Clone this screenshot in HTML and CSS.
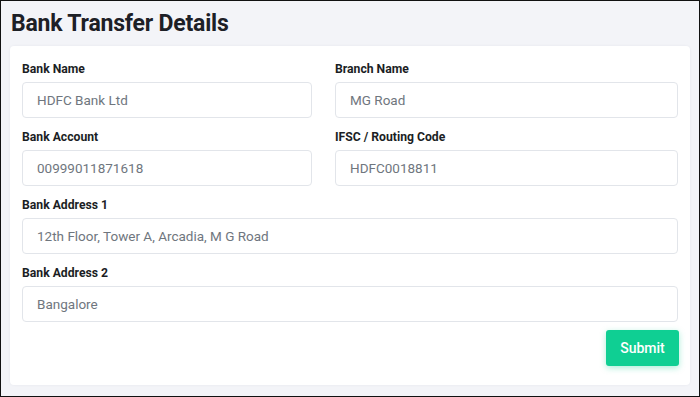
FILE: index.html
```html
<!DOCTYPE html>
<html lang="en">
<head>
<meta charset="utf-8">
<title>Bank Transfer Details</title>
<link rel="stylesheet" href="styles.css">
</head>
<body>
<div class="frame">
  <h1 class="title">Bank Transfer Details</h1>
  <form class="card">
    <div class="grid">
      <div class="field">
        <label class="label">Bank Name</label>
        <div class="input">HDFC Bank Ltd</div>
      </div>
      <div class="field">
        <label class="label">Branch Name</label>
        <div class="input">MG Road</div>
      </div>
      <div class="field">
        <label class="label">Bank Account</label>
        <div class="input">00999011871618</div>
      </div>
      <div class="field">
        <label class="label">IFSC / Routing Code</label>
        <div class="input">HDFC0018811</div>
      </div>
      <div class="field full">
        <label class="label">Bank Address 1</label>
        <div class="input">12th Floor, Tower A, Arcadia, M G Road</div>
      </div>
      <div class="field full">
        <label class="label">Bank Address 2</label>
        <div class="input">Bangalore</div>
      </div>
    </div>
    <div class="actions">
      <button type="button" class="btn">Submit</button>
    </div>
  </form>
</div>
</body>
</html>
```
FILE: styles.css
```css
* { box-sizing: border-box; }
html, body { margin: 0; padding: 0; }
body {
  font-family: Roboto, "Liberation Sans", Arial, sans-serif;
  background: #ffffff;
}
.frame {
  width: 700px;
  height: 397px;
  border: 1px solid #111;
  background: #f3f4f8;
  padding: 0 9px 0 9px;
  overflow: hidden;
}
.title {
  margin: 0;
  padding: 9px 0 0 1px;
  height: 45px;
  font-size: 23px;
  line-height: 28px;
  font-weight: 700;
  color: #1d2026;
  letter-spacing: -0.2px;
}
.card {
  background: #ffffff;
  border-radius: 4px;
  box-shadow: 0 0 3px rgba(20, 30, 60, 0.06);
  padding: 14px 11px 19px 12px;
}
.grid {
  display: grid;
  grid-template-columns: 290px 1fr;
  column-gap: 23px;
  margin-right: 1px;
}
.field { display: flex; flex-direction: column; margin-bottom: 10px; }
.field.full { grid-column: 1 / -1; }
.field:last-child { margin-bottom: 8px; }
.label {
  font-size: 12.2px;
  line-height: 18px;
  font-weight: 700;
  color: #1b1e24;
  margin-bottom: 4px;
}
.input {
  height: 36px;
  border: 1px solid #e2e5ea;
  border-radius: 4px;
  padding: 0 13px 0 14px;
  font-size: 13.5px;
  line-height: 34px;
  color: #6f767e;
}
.actions { display: flex; justify-content: flex-end; }
.btn {
  width: 73px;
  height: 36px;
  border: none;
  border-radius: 3px;
  background: #0fcf93;
  color: #ffffff;
  font-family: Roboto, "Liberation Sans", Arial, sans-serif;
  font-size: 14px;
  font-weight: 500;
  box-shadow: 0 2px 6px rgba(15, 207, 147, 0.35);
  cursor: pointer;
}
```
